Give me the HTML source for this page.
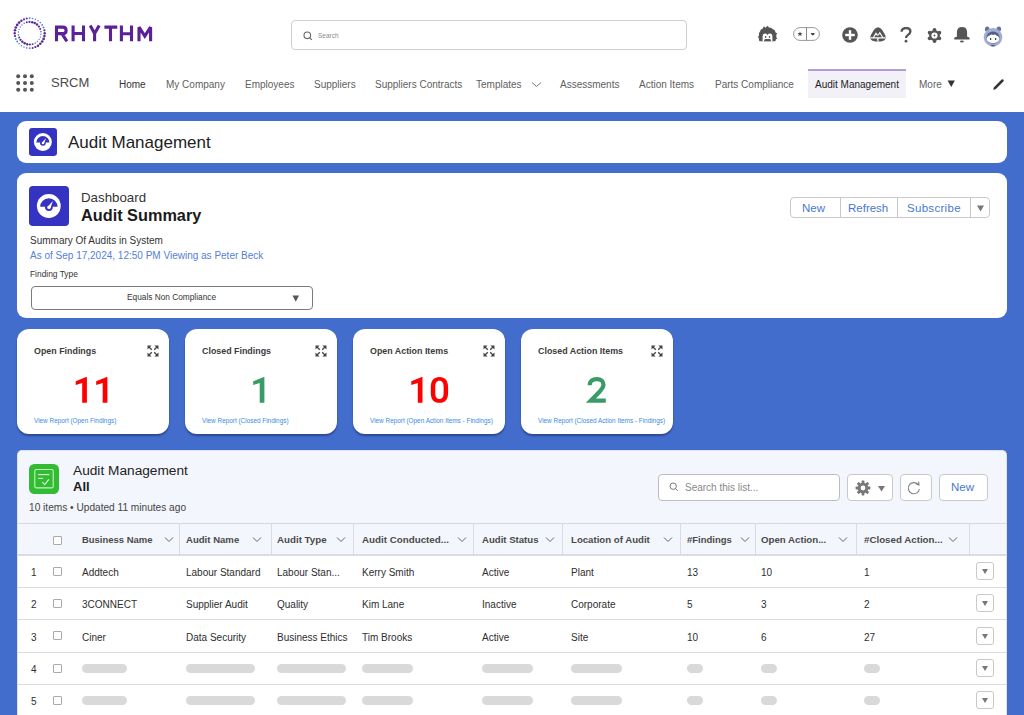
<!DOCTYPE html>
<html><head><meta charset="utf-8">
<style>
*{margin:0;padding:0;box-sizing:border-box}
html,body{width:1024px;height:715px;overflow:hidden;background:#fff;font-family:"Liberation Sans",sans-serif;color:#222}
.a{position:absolute;white-space:nowrap}
#hdr{position:absolute;left:0;top:0;width:1024px;height:112px;background:#fff}
#bg{position:absolute;left:0;top:112px;width:1024px;height:603px;background:#436dcc}
.card{position:absolute;background:#fff;border-radius:9px}
.nav{font-size:10px;color:#606060;top:79px}
.kpi{position:absolute;top:329px;width:152px;height:105px;background:#fff;border-radius:12px;box-shadow:0 2px 2px rgba(0,0,40,.35)}
.kpi .t{position:absolute;left:17px;top:17px;font-size:8.9px;font-weight:bold;color:#3b3b3b}
.kpi .n{position:absolute;left:0;width:152px;text-align:center;top:38px;font-size:36px;line-height:40px;letter-spacing:-1px}
.kpi .l{position:absolute;left:17px;top:88px;font-size:6.4px;color:#3a8ce0}
.kpi .ex{position:absolute;left:130px;top:16px}
.kpi .num{position:absolute;left:0;top:47.7px;overflow:visible}
.th{position:absolute;top:534px;font-size:9.4px;font-weight:bold;color:#4a4a4a}
.chev{position:absolute;top:536px}
.vd{position:absolute;top:524px;width:1px;height:31px;background:#d8dbe2}
.hl{position:absolute;left:17px;width:990px;height:1px;background:#dcdcdc}
.td{position:absolute;font-size:10px;color:#2e2e2e}
.cb{position:absolute;left:53px;width:9px;height:9px;border:1px solid #aaa;border-radius:1px;background:#fff}
.sk{position:absolute;height:9px;border-radius:5px;background:#d9d9d9}
.rb{position:absolute;left:976px;width:18px;height:18px;border:1px solid #c9c9c9;border-radius:3px;background:#fff}
.rb:after{content:"";position:absolute;left:5px;top:6px;border-left:3.5px solid transparent;border-right:3.5px solid transparent;border-top:5px solid #777}
</style></head><body>
<div id="hdr"></div>
<!-- logo -->
<svg class="a" style="left:0;top:0" width="60" height="60" viewBox="0 0 60 60"><circle cx="44.7" cy="33.2" r="1.21" fill="#5a2a9c"/><circle cx="44.4" cy="36.1" r="1.30" fill="#5a2a9c"/><circle cx="43.6" cy="38.9" r="1.34" fill="#5a2a9c"/><circle cx="42.2" cy="41.5" r="1.35" fill="#5a2a9c"/><circle cx="40.3" cy="43.8" r="1.30" fill="#5a2a9c"/><circle cx="38.0" cy="45.7" r="1.22" fill="#5a2a9c"/><circle cx="35.4" cy="47.1" r="1.11" fill="#5a2a9c"/><circle cx="32.6" cy="47.9" r="1.00" fill="#5a2a9c"/><circle cx="29.7" cy="48.2" r="0.89" fill="#4f7fe0"/><circle cx="26.8" cy="47.9" r="0.80" fill="#4f7fe0"/><circle cx="24.0" cy="47.1" r="0.76" fill="#4f7fe0"/><circle cx="21.4" cy="45.7" r="0.75" fill="#4f7fe0"/><circle cx="19.1" cy="43.8" r="0.80" fill="#4f7fe0"/><circle cx="17.2" cy="41.5" r="0.88" fill="#4f7fe0"/><circle cx="15.8" cy="38.9" r="0.99" fill="#4f7fe0"/><circle cx="15.0" cy="36.1" r="1.10" fill="#5a2a9c"/><circle cx="14.7" cy="33.2" r="1.21" fill="#5a2a9c"/><circle cx="15.0" cy="30.3" r="1.30" fill="#5a2a9c"/><circle cx="15.8" cy="27.5" r="1.34" fill="#5a2a9c"/><circle cx="17.2" cy="24.9" r="1.35" fill="#5a2a9c"/><circle cx="19.1" cy="22.6" r="1.30" fill="#5a2a9c"/><circle cx="21.4" cy="20.7" r="1.22" fill="#5a2a9c"/><circle cx="24.0" cy="19.3" r="1.11" fill="#5a2a9c"/><circle cx="26.8" cy="18.5" r="1.00" fill="#5a2a9c"/><circle cx="29.7" cy="18.2" r="0.89" fill="#4f7fe0"/><circle cx="32.6" cy="18.5" r="0.80" fill="#4f7fe0"/><circle cx="35.4" cy="19.3" r="0.76" fill="#4f7fe0"/><circle cx="38.0" cy="20.7" r="0.75" fill="#4f7fe0"/><circle cx="40.3" cy="22.6" r="0.80" fill="#4f7fe0"/><circle cx="42.2" cy="24.9" r="0.88" fill="#4f7fe0"/><circle cx="43.6" cy="27.5" r="0.99" fill="#4f7fe0"/><circle cx="44.4" cy="30.3" r="1.10" fill="#5a2a9c"/><circle cx="40.9" cy="34.3" r="0.74" fill="#4f7fe0"/><circle cx="40.3" cy="37.0" r="0.66" fill="#4f7fe0"/><circle cx="39.1" cy="39.4" r="0.65" fill="#4f7fe0"/><circle cx="37.4" cy="41.5" r="0.71" fill="#4f7fe0"/><circle cx="35.2" cy="43.1" r="0.82" fill="#4f7fe0"/><circle cx="32.6" cy="44.1" r="0.96" fill="#5a2a9c"/><circle cx="29.9" cy="44.5" r="1.10" fill="#5a2a9c"/><circle cx="27.2" cy="44.2" r="1.20" fill="#5a2a9c"/><circle cx="24.7" cy="43.3" r="1.25" fill="#5a2a9c"/><circle cx="22.4" cy="41.8" r="1.23" fill="#5a2a9c"/><circle cx="20.5" cy="39.8" r="1.14" fill="#5a2a9c"/><circle cx="19.2" cy="37.4" r="1.01" fill="#5a2a9c"/><circle cx="18.5" cy="34.8" r="0.86" fill="#4f7fe0"/><circle cx="18.5" cy="32.1" r="0.74" fill="#4f7fe0"/><circle cx="19.1" cy="29.4" r="0.66" fill="#4f7fe0"/><circle cx="20.3" cy="27.0" r="0.65" fill="#4f7fe0"/><circle cx="22.0" cy="24.9" r="0.71" fill="#4f7fe0"/><circle cx="24.2" cy="23.3" r="0.82" fill="#4f7fe0"/><circle cx="26.8" cy="22.3" r="0.96" fill="#5a2a9c"/><circle cx="29.5" cy="21.9" r="1.10" fill="#5a2a9c"/><circle cx="32.2" cy="22.2" r="1.20" fill="#5a2a9c"/><circle cx="34.7" cy="23.1" r="1.25" fill="#5a2a9c"/><circle cx="37.0" cy="24.6" r="1.23" fill="#5a2a9c"/><circle cx="38.9" cy="26.6" r="1.14" fill="#5a2a9c"/><circle cx="40.2" cy="29.0" r="1.01" fill="#5a2a9c"/><circle cx="40.9" cy="31.6" r="0.86" fill="#4f7fe0"/></svg>
<svg class="a" style="left:0;top:0" width="160" height="50" viewBox="0 0 160 50"><path fill="none" stroke="#5b2199" stroke-width="3.1" stroke-linejoin="miter" stroke-miterlimit="2" d="M56.5,41.3 V27.15 H62.9 Q66.1,27.15 66.1,30.4 Q66.1,33.6 62.9,33.6 H56.5 M62,33.6 L66.9,41.3 M73.1,25.6 V41.3 M83.5,25.6 V41.3 M73.1,33.5 H83.5 M90.2,25.6 L94.6,33.6 M99.2,25.6 L94.6,33.6 M94.6,33.4 V41.3 M104.4,27.15 H117.3 M110.5,27.15 V41.3 M121.4,25.6 V41.3 M131.5,25.6 V41.3 M121.4,33.8 H131.5 M139,41.3 V27.15 L144.8,36.2 L150.6,27.15 V41.3"/></svg>
<!-- search -->
<div class="a" style="left:291px;top:20px;width:396px;height:30px;border:1.5px solid #cfcfcf;border-radius:4px;background:#fff"></div>
<svg class="a" style="left:303px;top:31px" width="10" height="10" viewBox="0 0 10 10"><circle cx="4.3" cy="4.3" r="3.3" fill="none" stroke="#666" stroke-width="1.1"/><line x1="6.6" y1="6.6" x2="8.8" y2="8.8" stroke="#666" stroke-width="1.1"/></svg>
<div class="a" style="left:318px;top:32px;font-size:6.5px;color:#8a8a8a">Search</div>
<!-- header icons -->
<svg class="a" style="left:757px;top:25px" width="21" height="18" viewBox="0 0 21 18"><path fill="#555" d="M2.5,16.2 Q1.6,14.5 1.9,13 L0.6,11.8 L2.1,11 Q1.4,8.4 3,6.6 Q3.4,4.2 5.8,3.6 L6.8,1.2 L8.7,2.7 L10.4,0.8 L11.9,2.6 Q14.2,2.1 15.6,4 Q18.3,4.8 18.6,7.6 L20.2,8.6 L19.1,10.2 Q19.8,11.5 19.3,12.6 L20.4,13.8 L18.9,14.3 Q18.8,15.6 18.2,16.2 Z"/><path fill="#fff" d="M5.6,16.3 V11.7 Q5.6,8.6 8.2,8.6 Q9.6,8.6 10.5,10 Q11.4,8.6 12.8,8.6 Q15.4,8.6 15.4,11.7 V16.3 Z"/><ellipse cx="8.6" cy="12" rx="0.75" ry="1" fill="#555"/><ellipse cx="12.5" cy="12" rx="0.75" ry="1" fill="#555"/><path fill="#555" d="M7.2,16.3 V15.3 Q7.2,14 8.8,14 H12.3 Q13.9,14 13.9,15.3 V16.3 Z"/></svg>
<svg class="a" style="left:793px;top:27px" width="27" height="14" viewBox="0 0 27 14"><rect x="0.6" y="0.6" width="25.8" height="12.8" rx="6.4" fill="#fff" stroke="#9a9a9a" stroke-width="1"/><line x1="13.5" y1="0.6" x2="13.5" y2="13.4" stroke="#777" stroke-width="0.9"/><polygon fill="#444" points="7,4.3 7.7,6.2 9.6,6.2 8.1,7.4 8.7,9.3 7,8.1 5.3,9.3 5.9,7.4 4.4,6.2 6.3,6.2"/><path fill="#444" d="M17.8,6 H21.8 Q21.2,8.4 19.8,8.4 Q18.4,8.4 17.8,6Z"/></svg>
<svg class="a" style="left:842px;top:27px" width="16" height="16" viewBox="0 0 16 16"><circle cx="8" cy="8" r="7.8" fill="#555"/><rect x="6.8" y="3.2" width="2.4" height="9.6" fill="#fff"/><rect x="3.2" y="6.8" width="9.6" height="2.4" fill="#fff"/></svg>
<svg class="a" style="left:870px;top:27px" width="16" height="15" viewBox="0 0 16 15"><path fill="#555" d="M8,0.3 Q10.2,0.3 12.2,3 L15,7.8 Q16.3,10.6 15,12.6 Q13.5,14.6 8,14.6 Q2.5,14.6 1,12.6 Q-0.3,10.6 1,7.8 L3.8,3 Q5.8,0.3 8,0.3Z"/><path fill="none" stroke="#fff" stroke-width="1.1" d="M3.6,10.3 L6,6.2 L7.6,8.6 M8.2,8.2 L9.8,5.8 L12.6,10.3 M0.5,10.9 L15.5,10.9 M8.6,10.9 L7.6,12.6 L8.4,14.8"/></svg>
<svg class="a" style="left:900px;top:27px" width="12" height="16" viewBox="0 0 12 16"><path d="M1.6,4.8 C1.6,2.4 3.4,1 6,1 C8.6,1 10.4,2.5 10.4,4.6 C10.4,6.4 9.2,7.2 7.8,8.1 C6.6,8.9 6,9.5 6,11" fill="none" stroke="#555" stroke-width="2.3"/><circle cx="6" cy="14.2" r="1.4" fill="#555"/></svg>
<svg class="a" style="left:926.5px;top:27.5px" width="15" height="15" viewBox="0 0 15 15"><g fill="#555"><circle cx="7.5" cy="7.5" r="5.4"/><circle cx="7.50" cy="1.90" r="1.9"/><circle cx="12.35" cy="4.70" r="1.9"/><circle cx="12.35" cy="10.30" r="1.9"/><circle cx="7.50" cy="13.10" r="1.9"/><circle cx="2.65" cy="10.30" r="1.9"/><circle cx="2.65" cy="4.70" r="1.9"/></g><circle cx="7.5" cy="7.5" r="3.1" fill="#fff"/><path fill="#555" d="M8.1,5.2 L6.3,7.9 L7.5,7.9 L6.9,9.8 L8.7,7.1 L7.5,7.1Z"/></svg>
<svg class="a" style="left:953px;top:27px" width="18" height="16" viewBox="0 0 18 16"><path fill="#555" d="M3.9,9.8 V5.2 Q3.9,0 9,0 Q14.1,0 14.1,5.2 V9.8 Q16.6,10.2 16.6,11.2 V12.5 H1.2 V11.2 Q1.2,10.2 3.9,9.8Z"/><ellipse cx="8.9" cy="14.6" rx="1.9" ry="1" fill="#555"/></svg>
<svg class="a" style="left:982.5px;top:25.5px" width="20" height="21" viewBox="0 0 20 21"><ellipse cx="4.2" cy="3.2" rx="2.3" ry="2.6" fill="#66749c"/><ellipse cx="15.8" cy="3.2" rx="2.3" ry="2.6" fill="#66749c"/><ellipse cx="10" cy="11.3" rx="9.3" ry="9.2" fill="#a0aed2"/><ellipse cx="10" cy="11.6" rx="6.6" ry="6.1" fill="#52608a"/><path fill="#fff" d="M3.6,12.6 Q4.5,9.5 7,9.3 Q8.5,8 10,9 Q12,7.8 13.5,9.4 Q15.8,9.8 16.4,12.6 Q16,17 10,17.2 Q4,17 3.6,12.6Z"/><ellipse cx="7.6" cy="13" rx="0.8" ry="1" fill="#333"/><ellipse cx="12.6" cy="13" rx="0.8" ry="1" fill="#333"/><ellipse cx="10" cy="19.6" rx="2.2" ry="0.9" fill="#52608a"/></svg>
<!-- nav -->
<svg class="a" style="left:16px;top:74px" width="18" height="18" viewBox="0 0 18 18" fill="#555"><circle cx="2.2" cy="2.2" r="2"/><circle cx="9" cy="2.2" r="2"/><circle cx="15.8" cy="2.2" r="2"/><circle cx="2.2" cy="9" r="2"/><circle cx="9" cy="9" r="2"/><circle cx="15.8" cy="9" r="2"/><circle cx="2.2" cy="15.8" r="2"/><circle cx="9" cy="15.8" r="2"/><circle cx="15.8" cy="15.8" r="2"/></svg>
<div class="a" style="left:51px;top:75px;font-size:13px;color:#4a4a4a">SRCM</div>
<div class="a nav" style="left:119px;color:#333">Home</div>
<div class="a nav" style="left:166px">My Company</div>
<div class="a nav" style="left:245px">Employees</div>
<div class="a nav" style="left:314px">Suppliers</div>
<div class="a nav" style="left:375px">Suppliers Contracts</div>
<div class="a nav" style="left:476px">Templates</div>
<svg class="a" style="left:531px;top:81px" width="11" height="7" viewBox="0 0 11 7"><polyline points="1,1.5 5.5,5.5 10,1.5" fill="none" stroke="#777" stroke-width="1"/></svg>
<div class="a nav" style="left:560px">Assessments</div>
<div class="a nav" style="left:639px">Action Items</div>
<div class="a nav" style="left:715px">Parts Compliance</div>
<div class="a" style="left:808px;top:69px;width:98px;height:29px;background:#f3f1f8;border-top:2.5px solid #b49bd6"></div>
<div class="a nav" style="left:815px;color:#222">Audit Management</div>
<div class="a nav" style="left:919px">More</div>
<svg class="a" style="left:947px;top:80px" width="9" height="8" viewBox="0 0 9 8"><polygon points="0.6,0.6 7.9,0.6 4.25,7" fill="#333"/></svg>
<svg class="a" style="left:992px;top:78px" width="13" height="13" viewBox="0 0 13 13"><path d="M1.2,11.8 L1.8,9.4 L9.6,1.6 Q10.4,0.8 11.2,1.6 L11.4,1.8 Q12.2,2.6 11.4,3.4 L3.6,11.2 Z" fill="#333"/></svg>

<div id="bg"></div>
<!-- title card -->
<div class="card" style="left:17px;top:121px;width:990px;height:42px"></div>
<svg class="a" style="left:29px;top:128px" width="28" height="28" viewBox="0 0 40 40"><rect width="40" height="40" rx="4.5" fill="#3533c2"/><g transform="translate(20,20) scale(1.08) translate(-20,-20)"><circle cx="19.8" cy="20" r="11.9" fill="#fff"/><path d="M11.2,20.8 A8.65,8.65 0 0 1 28.5,20.8 Z" fill="#3533c2"/><circle cx="19.9" cy="21.1" r="3.9" fill="#3533c2"/><circle cx="20" cy="21.4" r="1.7" fill="#fff"/><polygon points="18.4,21.1 21.6,21.8 23.9,15" fill="#fff"/></g></svg>
<div class="a" style="left:68px;top:133px;font-size:17px;color:#222">Audit Management</div>

<!-- dashboard card -->
<div class="card" style="left:17px;top:173px;width:990px;height:145px"></div>
<svg class="a" style="left:29px;top:186px" width="40" height="40" viewBox="0 0 40 40"><rect width="40" height="40" rx="4" fill="#3533c2"/><circle cx="19.8" cy="20" r="11.9" fill="#fff"/><path d="M11.2,20.8 A8.65,8.65 0 0 1 28.5,20.8 Z" fill="#3533c2"/><circle cx="19.9" cy="21.1" r="3.9" fill="#3533c2"/><circle cx="20" cy="21.4" r="1.7" fill="#fff"/><polygon points="18.4,21.1 21.6,21.8 23.9,15" fill="#fff"/></svg>
<div class="a" style="left:81px;top:190px;font-size:13.3px;color:#333">Dashboard</div>
<div class="a" style="left:81px;top:206px;font-size:16.3px;font-weight:bold;color:#1a1a1a">Audit Summary</div>
<div class="a" style="left:30px;top:235px;font-size:10px;color:#333">Summary Of Audits in System</div>
<div class="a" style="left:30px;top:250px;font-size:10px;color:#5580d6">As of Sep 17,2024, 12:50 PM Viewing as Peter Beck</div>
<div class="a" style="left:30px;top:269px;font-size:8.4px;color:#333">Finding Type</div>
<div class="a" style="left:31px;top:286px;width:282px;height:24px;border:1px solid #7a7a7a;border-radius:4px"></div>
<div class="a" style="left:127px;top:292px;font-size:8.3px;color:#333">Equals Non Compliance</div>
<svg class="a" style="left:292px;top:295px" width="8" height="8" viewBox="0 0 8 8"><polygon points="0.5,0.5 7,0.5 3.75,6.7" fill="#555"/></svg>
<!-- button group -->
<div class="a" style="left:790px;top:197px;width:200px;height:21px;border:1px solid #c9c9c9;border-radius:4px;background:#fff"></div>
<div class="a" style="left:840px;top:198px;width:1px;height:19px;background:#c9c9c9"></div>
<div class="a" style="left:897px;top:198px;width:1px;height:19px;background:#c9c9c9"></div>
<div class="a" style="left:970px;top:198px;width:1px;height:19px;background:#c9c9c9"></div>
<div class="a" style="left:802px;top:202px;font-size:11.5px;color:#4a78d2">New</div>
<div class="a" style="left:848px;top:202px;font-size:11.5px;color:#4a78d2">Refresh</div>
<div class="a" style="left:907px;top:202px;font-size:11.5px;letter-spacing:0.3px;color:#4a78d2">Subscribe</div>
<svg class="a" style="left:977px;top:205px" width="7" height="7" viewBox="0 0 7 7"><polygon points="0,0.5 7,0.5 3.5,6.5" fill="#777"/></svg>

<!-- KPI cards -->
<div class="kpi" style="left:17px"><div class="t">Open Findings</div><svg class="ex" width="12" height="12" viewBox="0 0 12 12"><g fill="#444"><polygon points="0.5,0.5 4.6,0.5 0.5,4.6"/><polygon points="11.5,0.5 7.4,0.5 11.5,4.6"/><polygon points="0.5,11.5 4.6,11.5 0.5,7.4"/><polygon points="11.5,11.5 7.4,11.5 11.5,7.4"/></g><g stroke="#444" stroke-width="1.3"><line x1="2" y1="2" x2="4.8" y2="4.8"/><line x1="10" y1="2" x2="7.2" y2="4.8"/><line x1="2" y1="10" x2="4.8" y2="7.2"/><line x1="10" y1="10" x2="7.2" y2="7.2"/></g></svg><svg class="num" width="152" height="27" viewBox="0 0 152 27"><path transform="translate(58.7,0)" fill="#ff0000" d="M11.2,0 L11.2,25.8 L6.5,25.8 L6.5,5.9 L0,8.1 L0,4.3 L10.5,0 Z"/><path transform="translate(79.2,0)" fill="#ff0000" d="M11.2,0 L11.2,25.8 L6.5,25.8 L6.5,5.9 L0,8.1 L0,4.3 L10.5,0 Z"/></svg><div class="l">View Report (Open Findings)</div></div>
<div class="kpi" style="left:185px"><div class="t">Closed Findings</div><svg class="ex" width="12" height="12" viewBox="0 0 12 12"><g fill="#444"><polygon points="0.5,0.5 4.6,0.5 0.5,4.6"/><polygon points="11.5,0.5 7.4,0.5 11.5,4.6"/><polygon points="0.5,11.5 4.6,11.5 0.5,7.4"/><polygon points="11.5,11.5 7.4,11.5 11.5,7.4"/></g><g stroke="#444" stroke-width="1.3"><line x1="2" y1="2" x2="4.8" y2="4.8"/><line x1="10" y1="2" x2="7.2" y2="4.8"/><line x1="2" y1="10" x2="4.8" y2="7.2"/><line x1="10" y1="10" x2="7.2" y2="7.2"/></g></svg><svg class="num" width="152" height="27" viewBox="0 0 152 27"><path transform="translate(68.2,0)" fill="#3a9b66" d="M11.2,0 L11.2,25.8 L6.5,25.8 L6.5,5.9 L0,8.1 L0,4.3 L10.5,0 Z"/></svg><div class="l">View Report (Closed Findings)</div></div>
<div class="kpi" style="left:353px"><div class="t">Open Action Items</div><svg class="ex" width="12" height="12" viewBox="0 0 12 12"><g fill="#444"><polygon points="0.5,0.5 4.6,0.5 0.5,4.6"/><polygon points="11.5,0.5 7.4,0.5 11.5,4.6"/><polygon points="0.5,11.5 4.6,11.5 0.5,7.4"/><polygon points="11.5,11.5 7.4,11.5 11.5,7.4"/></g><g stroke="#444" stroke-width="1.3"><line x1="2" y1="2" x2="4.8" y2="4.8"/><line x1="10" y1="2" x2="7.2" y2="4.8"/><line x1="2" y1="10" x2="4.8" y2="7.2"/><line x1="10" y1="10" x2="7.2" y2="7.2"/></g></svg><svg class="num" width="152" height="27" viewBox="0 0 152 27"><path transform="translate(58.3,0)" fill="#ff0000" d="M11.2,0 L11.2,25.8 L6.5,25.8 L6.5,5.9 L0,8.1 L0,4.3 L10.5,0 Z"/><path transform="translate(77.8,0)" fill="#ff0000" fill-rule="evenodd" d="M8.65,0 C14.2,0 17.3,3.6 17.3,10 L17.3,15.9 C17.3,22.4 14.2,25.8 8.65,25.8 C3.1,25.8 0,22.4 0,15.9 L0,10 C0,3.6 3.1,0 8.65,0 Z M8.65,3.7 C5.6,3.7 4.45,5.9 4.45,10.2 L4.45,15.6 C4.45,19.9 5.6,22.1 8.65,22.1 C11.7,22.1 12.85,19.9 12.85,15.6 L12.85,10.2 C12.85,5.9 11.7,3.7 8.65,3.7 Z"/></svg><div class="l">View Report (Open Action Items - Findings)</div></div>
<div class="kpi" style="left:521px"><div class="t">Closed Action Items</div><svg class="ex" width="12" height="12" viewBox="0 0 12 12"><g fill="#444"><polygon points="0.5,0.5 4.6,0.5 0.5,4.6"/><polygon points="11.5,0.5 7.4,0.5 11.5,4.6"/><polygon points="0.5,11.5 4.6,11.5 0.5,7.4"/><polygon points="11.5,11.5 7.4,11.5 11.5,7.4"/></g><g stroke="#444" stroke-width="1.3"><line x1="2" y1="2" x2="4.8" y2="4.8"/><line x1="10" y1="2" x2="7.2" y2="4.8"/><line x1="2" y1="10" x2="4.8" y2="7.2"/><line x1="10" y1="10" x2="7.2" y2="7.2"/></g></svg><svg class="num" width="152" height="27" viewBox="0 0 152 27"><path transform="translate(66.6,0)" fill="none" stroke="#3a9b66" stroke-width="4.2" stroke-linejoin="miter" d="M2.1,8.3 C2.1,4.3 4.8,2.1 9.2,2.1 C13.3,2.1 15.9,4.4 15.9,7.6 C15.9,10.1 14.6,11.8 12.4,14.2 L3.2,23.7 L18.2,23.7"/></svg><div class="l">View Report (Closed Action Items - Findings)</div></div>

<!-- list card -->
<div class="a" style="left:17px;top:450px;width:990px;height:300px;background:#f3f6fc;border-radius:5px 5px 0 0;border:1px solid #dde1e8;border-bottom:none"></div>
<svg class="a" style="left:29px;top:464px" width="30" height="30" viewBox="0 0 30 30"><rect width="30" height="30" rx="5.5" fill="#31bc31"/><rect x="5.8" y="5.5" width="18.4" height="18.4" rx="1.5" fill="none" stroke="#c8efc8" stroke-width="1.1"/><line x1="9.1" y1="10.6" x2="20.4" y2="10.6" stroke="#d8f5d8" stroke-width="1.1"/><line x1="9.1" y1="14.4" x2="14" y2="14.4" stroke="#d8f5d8" stroke-width="1.1"/><polyline points="13.4,18.2 15.6,20.6 19.9,15.4" fill="none" stroke="#d8f5d8" stroke-width="1.2"/></svg>
<div class="a" style="left:73px;top:463px;font-size:13.7px;color:#222">Audit Management</div>
<div class="a" style="left:73px;top:479px;font-size:13px;font-weight:bold;color:#1a1a1a">All</div>
<div class="a" style="left:29px;top:502px;font-size:10.15px;color:#444">10 items • Updated 11 minutes ago</div>
<!-- toolbar -->
<div class="a" style="left:658px;top:474px;width:182px;height:27px;border:1px solid #bdbdbd;border-radius:4px;background:#fff"></div>
<svg class="a" style="left:669px;top:482px" width="10" height="10" viewBox="0 0 10 10"><circle cx="4.2" cy="4.2" r="3.2" fill="none" stroke="#777" stroke-width="1"/><line x1="6.5" y1="6.5" x2="8.8" y2="8.8" stroke="#777" stroke-width="1"/></svg>
<div class="a" style="left:685px;top:482px;font-size:10px;color:#888">Search this list...</div>
<div class="a" style="left:847px;top:474px;width:46px;height:27px;border:1px solid #c9c9c9;border-radius:4px;background:#fff"></div>
<svg class="a" style="left:854.6px;top:480.2px" width="16" height="16" viewBox="0 0 16 16"><g fill="#777"><rect x="6.6" y="0.6" width="2.8" height="3.4" rx="0.6" transform="rotate(0 8 8)"/><rect x="6.6" y="0.6" width="2.8" height="3.4" rx="0.6" transform="rotate(45 8 8)"/><rect x="6.6" y="0.6" width="2.8" height="3.4" rx="0.6" transform="rotate(90 8 8)"/><rect x="6.6" y="0.6" width="2.8" height="3.4" rx="0.6" transform="rotate(135 8 8)"/><rect x="6.6" y="0.6" width="2.8" height="3.4" rx="0.6" transform="rotate(180 8 8)"/><rect x="6.6" y="0.6" width="2.8" height="3.4" rx="0.6" transform="rotate(225 8 8)"/><rect x="6.6" y="0.6" width="2.8" height="3.4" rx="0.6" transform="rotate(270 8 8)"/><rect x="6.6" y="0.6" width="2.8" height="3.4" rx="0.6" transform="rotate(315 8 8)"/><circle cx="8" cy="8" r="5.2"/></g><circle cx="8" cy="8" r="2.4" fill="#fff"/></svg>
<svg class="a" style="left:877.5px;top:485.5px" width="7" height="6" viewBox="0 0 7 6"><polygon points="0,0 7,0 3.5,5.5" fill="#777"/></svg>
<div class="a" style="left:900px;top:474px;width:32px;height:27px;border:1px solid #c9c9c9;border-radius:4px;background:#fff"></div>
<svg class="a" style="left:906px;top:480px" width="16" height="16" viewBox="0 0 16 16"><path d="M12.6,5.2 A5.6,5.6 0 1 0 13.4,9" fill="none" stroke="#808080" stroke-width="1.1"/><polyline points="9.8,3.8 13,4.9 12.6,1.6" fill="none" stroke="#808080" stroke-width="1.1"/></svg>
<div class="a" style="left:939px;top:474px;width:49px;height:27px;border:1px solid #c9c9c9;border-radius:4px;background:#fff"></div>
<div class="a" style="left:951px;top:481px;font-size:11.5px;color:#4a78d2">New</div>

<!-- table -->
<div class="a" style="left:17px;top:523px;width:990px;height:1px;background:#d5d8df"></div>
<div class="a" style="left:18px;top:555px;width:988px;height:160px;background:#fff"></div>
<div class="a" style="left:17px;top:554px;width:990px;height:2px;background:#d9dce2"></div>
<div class="cb" style="top:536px"></div>
<div class="th" style="left:82px;font-size:9.46px">Business Name</div>
<svg class="chev" style="left:164px" width="10" height="7" viewBox="0 0 10 7"><polyline points="1,1.5 5,5.5 9,1.5" fill="none" stroke="#666" stroke-width="1"/></svg>
<div class="vd" style="left:179px"></div>
<div class="th" style="left:186px;font-size:9.59px">Audit Name</div>
<svg class="chev" style="left:252px" width="10" height="7" viewBox="0 0 10 7"><polyline points="1,1.5 5,5.5 9,1.5" fill="none" stroke="#666" stroke-width="1"/></svg>
<div class="vd" style="left:271px"></div>
<div class="th" style="left:277px;font-size:9.74px">Audit Type</div>
<svg class="chev" style="left:336px" width="10" height="7" viewBox="0 0 10 7"><polyline points="1,1.5 5,5.5 9,1.5" fill="none" stroke="#666" stroke-width="1"/></svg>
<div class="vd" style="left:353px"></div>
<div class="th" style="left:362px;font-size:9.79px">Audit Conducted...</div>
<svg class="chev" style="left:457px" width="10" height="7" viewBox="0 0 10 7"><polyline points="1,1.5 5,5.5 9,1.5" fill="none" stroke="#666" stroke-width="1"/></svg>
<div class="vd" style="left:473px"></div>
<div class="th" style="left:482px;font-size:9.61px">Audit Status</div>
<svg class="chev" style="left:545px" width="10" height="7" viewBox="0 0 10 7"><polyline points="1,1.5 5,5.5 9,1.5" fill="none" stroke="#666" stroke-width="1"/></svg>
<div class="vd" style="left:562px"></div>
<div class="th" style="left:571px;font-size:9.65px">Location of Audit</div>
<svg class="chev" style="left:663px" width="10" height="7" viewBox="0 0 10 7"><polyline points="1,1.5 5,5.5 9,1.5" fill="none" stroke="#666" stroke-width="1"/></svg>
<div class="vd" style="left:680px"></div>
<div class="th" style="left:687px;font-size:9.49px">#Findings</div>
<svg class="chev" style="left:740px" width="10" height="7" viewBox="0 0 10 7"><polyline points="1,1.5 5,5.5 9,1.5" fill="none" stroke="#666" stroke-width="1"/></svg>
<div class="vd" style="left:755px"></div>
<div class="th" style="left:761px;font-size:9.68px">Open Action...</div>
<svg class="chev" style="left:838px" width="10" height="7" viewBox="0 0 10 7"><polyline points="1,1.5 5,5.5 9,1.5" fill="none" stroke="#666" stroke-width="1"/></svg>
<div class="vd" style="left:856px"></div>
<div class="th" style="left:864px;font-size:9.74px">#Closed Action...</div>
<svg class="chev" style="left:948px" width="10" height="7" viewBox="0 0 10 7"><polyline points="1,1.5 5,5.5 9,1.5" fill="none" stroke="#666" stroke-width="1"/></svg>
<div class="vd" style="left:969px"></div>
<div class="td" style="left:31px;top:566.8px">1</div>
<div class="cb" style="top:566.5px"></div>
<div class="rb" style="top:562px"></div>
<div class="td" style="left:82px;top:567.0px">Addtech</div>
<div class="td" style="left:186px;top:567.0px">Labour Standard</div>
<div class="td" style="left:277px;top:567.0px">Labour Stan...</div>
<div class="td" style="left:362px;top:567.0px">Kerry Smith</div>
<div class="td" style="left:482px;top:567.0px">Active</div>
<div class="td" style="left:571px;top:567.0px">Plant</div>
<div class="td" style="left:687px;top:567.0px">13</div>
<div class="td" style="left:761px;top:567.0px">10</div>
<div class="td" style="left:864px;top:567.0px">1</div>
<div class="hl" style="top:586.7px"></div>
<div class="td" style="left:31px;top:599.0px">2</div>
<div class="cb" style="top:598.7px"></div>
<div class="rb" style="top:594.2px"></div>
<div class="td" style="left:82px;top:599.2px">3CONNECT</div>
<div class="td" style="left:186px;top:599.2px">Supplier Audit</div>
<div class="td" style="left:277px;top:599.2px">Quality</div>
<div class="td" style="left:362px;top:599.2px">Kim Lane</div>
<div class="td" style="left:482px;top:599.2px">Inactive</div>
<div class="td" style="left:571px;top:599.2px">Corporate</div>
<div class="td" style="left:687px;top:599.2px">5</div>
<div class="td" style="left:761px;top:599.2px">3</div>
<div class="td" style="left:864px;top:599.2px">2</div>
<div class="hl" style="top:619.2px"></div>
<div class="td" style="left:31px;top:631.5px">3</div>
<div class="cb" style="top:631.2px"></div>
<div class="rb" style="top:626.7px"></div>
<div class="td" style="left:82px;top:631.7px">Ciner</div>
<div class="td" style="left:186px;top:631.7px">Data Security</div>
<div class="td" style="left:277px;top:631.7px">Business Ethics</div>
<div class="td" style="left:362px;top:631.7px">Tim Brooks</div>
<div class="td" style="left:482px;top:631.7px">Active</div>
<div class="td" style="left:571px;top:631.7px">Site</div>
<div class="td" style="left:687px;top:631.7px">10</div>
<div class="td" style="left:761px;top:631.7px">6</div>
<div class="td" style="left:864px;top:631.7px">27</div>
<div class="hl" style="top:651.5px"></div>
<div class="td" style="left:31px;top:663.8px">4</div>
<div class="cb" style="top:663.5px"></div>
<div class="rb" style="top:659px"></div>
<div class="sk" style="left:82px;top:663.5px;width:45px"></div>
<div class="sk" style="left:186px;top:663.5px;width:69px"></div>
<div class="sk" style="left:277px;top:663.5px;width:69px"></div>
<div class="sk" style="left:362px;top:663.5px;width:51px"></div>
<div class="sk" style="left:482px;top:663.5px;width:51px"></div>
<div class="sk" style="left:571px;top:663.5px;width:51px"></div>
<div class="sk" style="left:687px;top:663.5px;width:16px"></div>
<div class="sk" style="left:761px;top:663.5px;width:16px"></div>
<div class="sk" style="left:864px;top:663.5px;width:16px"></div>
<div class="hl" style="top:683.8px"></div>
<div class="td" style="left:31px;top:696.0999999999999px">5</div>
<div class="cb" style="top:695.8px"></div>
<div class="rb" style="top:691.3px"></div>
<div class="sk" style="left:82px;top:695.8px;width:45px"></div>
<div class="sk" style="left:186px;top:695.8px;width:69px"></div>
<div class="sk" style="left:277px;top:695.8px;width:69px"></div>
<div class="sk" style="left:362px;top:695.8px;width:51px"></div>
<div class="sk" style="left:482px;top:695.8px;width:51px"></div>
<div class="sk" style="left:571px;top:695.8px;width:51px"></div>
<div class="sk" style="left:687px;top:695.8px;width:16px"></div>
<div class="sk" style="left:761px;top:695.8px;width:16px"></div>
<div class="sk" style="left:864px;top:695.8px;width:16px"></div>
</body></html>
